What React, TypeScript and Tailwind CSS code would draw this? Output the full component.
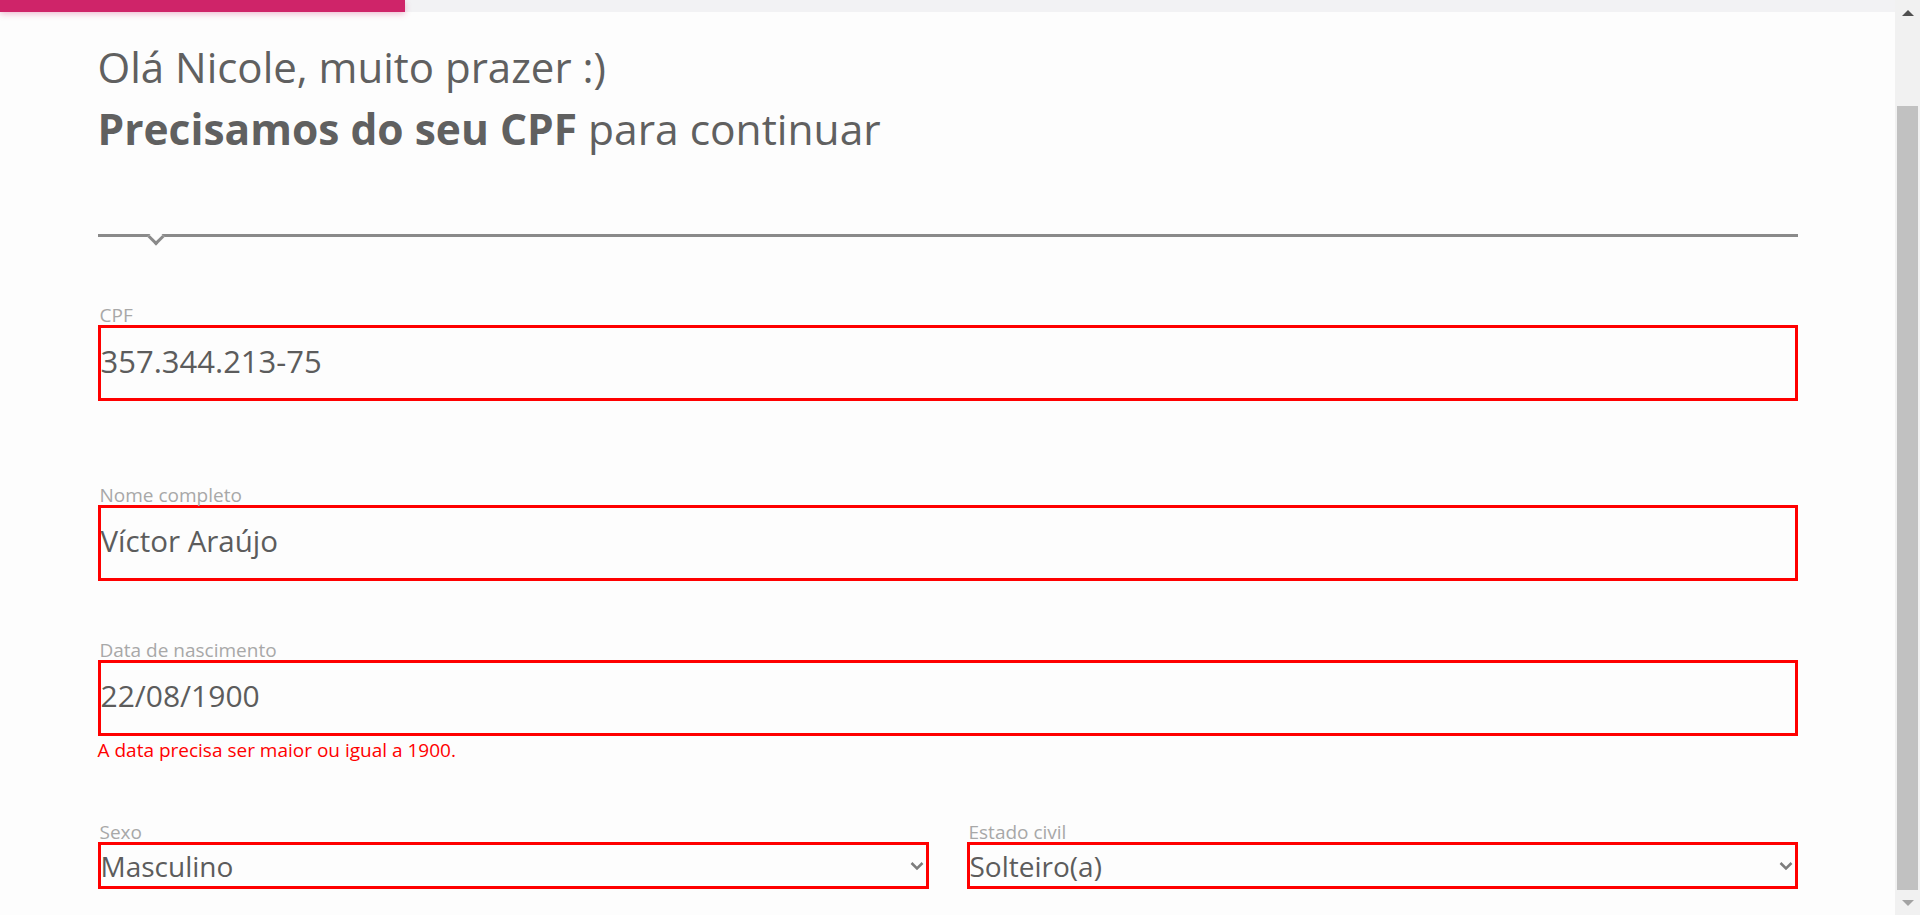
import React from 'react';

const labelCls = "block h-[19px] pl-[2px] text-[19px] leading-[19px] text-[#a8a8a8]";
const boxCls = "block w-full border-[3px] border-[#ff0000] bg-transparent p-0 text-[#5c5c5c] outline-none";

function Field({ label, value, size, className }: { label: string; value: string; size: string; className?: string }) {
  return (
    <div className={className}>
      <label className={labelCls}>{label}</label>
      <input readOnly value={value} className={`${boxCls} h-[76px] pb-[5px] ${size}`} />
    </div>
  );
}

function SelectField({ label, value, options }: { label: string; value: string; options: string[] }) {
  return (
    <div>
      <label className={labelCls}>{label}</label>
      <div className="relative">
        <select
          defaultValue={value}
          className={`${boxCls} h-[47px] appearance-none text-[28px] leading-[36px]`}
        >
          {options.map((o) => (
            <option key={o}>{o}</option>
          ))}
        </select>
        {/* select arrow */}
        <svg
          className="pointer-events-none absolute right-[5px] top-1/2 -translate-y-1/2"
          width="14"
          height="9"
          viewBox="0 0 14 9"
        >
          <path d="M1.5 1.5L7 7l5.5-5.5" stroke="#7d7d7d" strokeWidth="2.5" fill="none" />
        </svg>
      </div>
    </div>
  );
}

function Scrollbar() {
  return (
    <div className="flex h-full w-[25px] shrink-0 flex-col bg-[#f1f1f1]">
      <div className="flex h-[25px] items-center justify-center">
        <div className="h-0 w-0 border-x-[6px] border-b-[6px] border-x-transparent border-b-[#505050]" />
      </div>
      <div className="mx-[2px] mt-[81px] flex-1 bg-[#c1c1c1]" />
      <div className="flex h-[25px] items-center justify-center">
        <div className="h-0 w-0 border-x-[6px] border-t-[6px] border-x-transparent border-t-[#a3a3a3]" />
      </div>
    </div>
  );
}

export default function App() {
  return (
    <div className="flex h-[915px] w-full overflow-hidden bg-[#fdfdfd] font-['Open_Sans',sans-serif]">
      <div className="flex min-w-0 flex-1 flex-col">
        {/* progress bar */}
        <div className="h-[12px] shrink-0 bg-[#f2f2f4]">
          <div className="h-full w-[405px] bg-[#cf2469] shadow-[0_2px_6px_rgba(207,36,105,0.3)]" />
        </div>

        <main className="mx-auto w-[1700px]">
          <h1 className="mt-[24px] text-[42px] leading-[62px] font-normal text-[#606060]">
            Olá Nicole, muito prazer :)
          </h1>
          <h2 className="text-[42.5px] leading-[62px] font-normal text-[#606060]">
            <strong className="font-bold">Precisamos do seu CPF</strong> para continuar
          </h2>

          <div className="relative mt-[74px] border-t-[3px] border-[#8a8a8a]">
            <div className="absolute left-[52px] top-[-6px] h-[12px] w-[12px] rotate-45 border-r-[3px] border-b-[3px] border-[#8a8a8a] bg-[#fdfdfd]" />
          </div>

          <form className="mt-[69px]">
            <Field label="CPF" value="357.344.213-75" size="text-[31px]" />
            <Field label="Nome completo" value="Víctor Araújo" size="text-[29.5px]" className="mt-[85px]" />
            <Field label="Data de nascimento" value="22/08/1900" size="text-[30px]" className="mt-[60px]" />
            <p className="mt-[5px] text-[19px] leading-[18px] text-[#ff0000]">
              A data precisa ser maior ou igual a 1900.
            </p>
            <div className="mt-[64px] grid grid-cols-2 gap-[38px]">
              <SelectField label="Sexo" value="Masculino" options={["Masculino", "Feminino"]} />
              <SelectField
                label="Estado civil"
                value="Solteiro(a)"
                options={["Solteiro(a)", "Casado(a)", "Divorciado(a)", "Viúvo(a)"]}
              />
            </div>
          </form>
        </main>
      </div>
      <Scrollbar />
    </div>
  );
}
